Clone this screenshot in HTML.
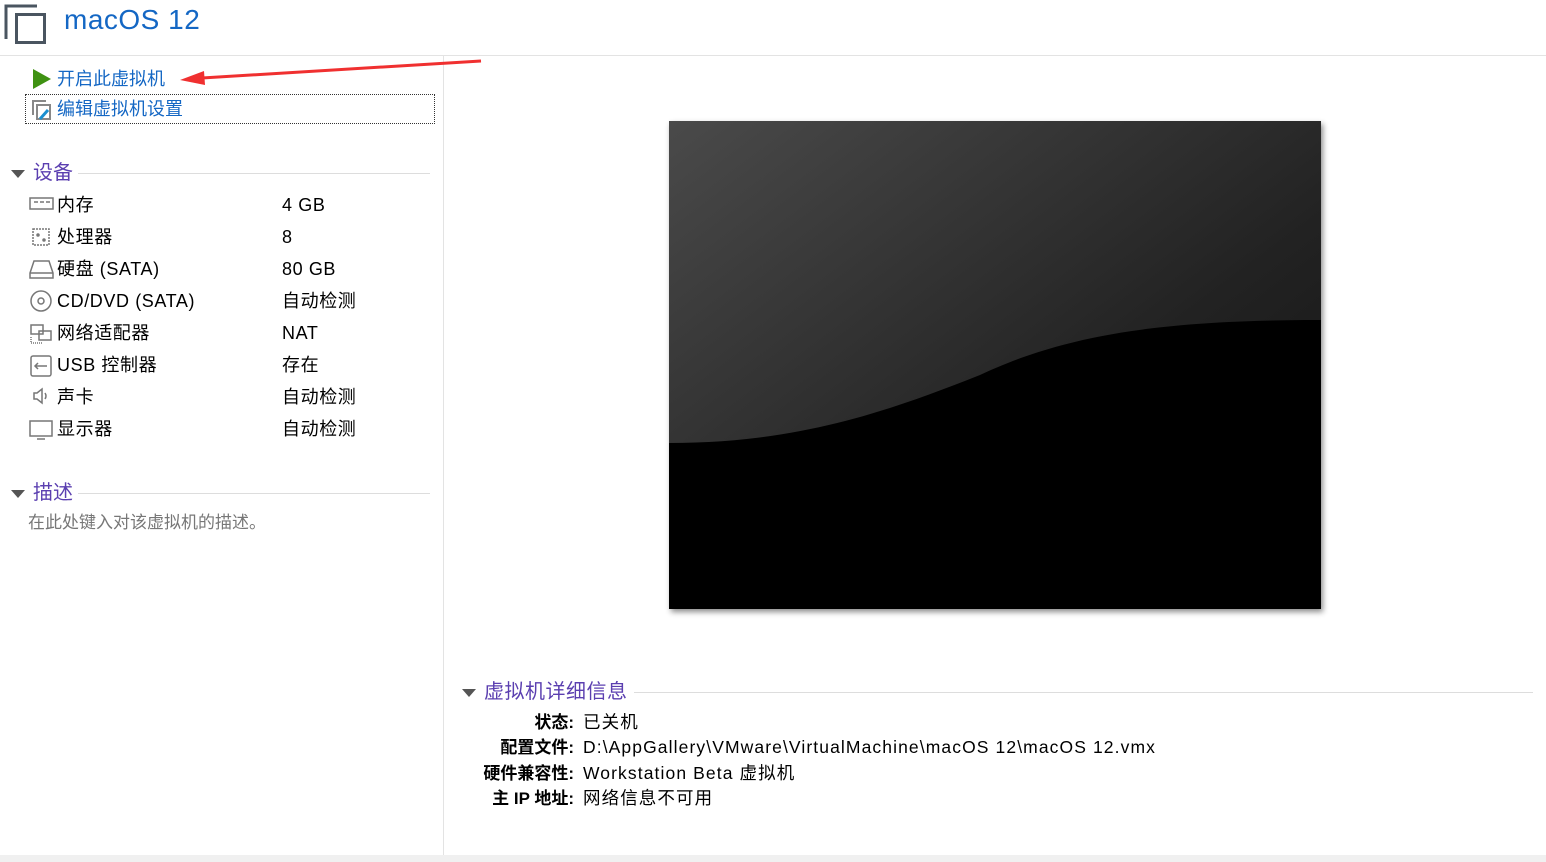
<!DOCTYPE html>
<html><head><meta charset="utf-8"><style>
*{margin:0;padding:0;box-sizing:border-box}
body{width:1546px;height:862px;background:#fff;font-family:"Liberation Sans","Noto Sans CJK SC",sans-serif;position:relative;overflow:hidden;color:#000}
.a{position:absolute;white-space:nowrap;line-height:22px}
.t{font-size:18px;letter-spacing:0.6px}
.hd{color:#5b3fb0;font-size:20px;line-height:26px}
.ln{position:absolute;height:1px;background:#ddd}
</style></head><body>
<svg class="a" style="left:3px;top:2px" width="44" height="44"><path d="M3 37V4H34" fill="none" stroke="#4a5560" stroke-width="3"/><rect x="13.5" y="12.5" width="28" height="28" fill="none" stroke="#4a5560" stroke-width="3"/></svg>
<div class="a" style="left:64px;top:4px;font-size:28px;line-height:32px;color:#1467c4;letter-spacing:0.5px">macOS 12</div>
<div class="ln" style="left:0;top:55px;width:1546px;background:#e3e3e3"></div>
<div class="a" style="left:443px;top:56px;width:1px;height:800px;background:#e3e3e3"></div>
<svg class="a" style="left:32px;top:69px" width="20" height="20"><path d="M1 0L19 10L1 20Z" fill="#3f9212"/></svg>
<div class="a" style="left:57px;top:68px;color:#1467c4;font-size:18px">开启此虚拟机</div>
<svg class="a" style="left:178px;top:58px" width="305" height="30"><path d="M303 3L24 20" stroke="#f03030" stroke-width="3"/><path d="M2 22L26 13L27 27Z" fill="#f03030"/></svg>
<div class="a" style="left:25px;top:94px;width:410px;height:30px;border:1px dotted #333"></div>
<svg class="a" style="left:31px;top:99px" width="22" height="22"><path d="M2 16V2H15" fill="none" stroke="#888" stroke-width="2"/><path d="M6 20V6H19V20Z" fill="none" stroke="#888" stroke-width="2"/><path d="M9 20L17 11" stroke="#1a8fd0" stroke-width="3"/></svg>
<div class="a" style="left:57px;top:98px;color:#1467c4;font-size:18px">编辑虚拟机设置</div>
<svg class="a" style="left:10px;top:169px" width="16" height="10"><path d="M1 1H15L8 9Z" fill="#555"/></svg>
<div class="a hd" style="left:33px;top:160px">设备</div>
<div class="ln" style="left:78px;top:173px;width:352px"></div>
<div class="a t" style="left:57px;top:194px">内存</div><div class="a t" style="left:282px;top:194px">4 GB</div>
<div class="a t" style="left:57px;top:226px">处理器</div><div class="a t" style="left:282px;top:226px">8</div>
<div class="a t" style="left:57px;top:258px">硬盘 (SATA)</div><div class="a t" style="left:282px;top:258px">80 GB</div>
<div class="a t" style="left:57px;top:290px">CD/DVD (SATA)</div><div class="a t" style="left:282px;top:290px">自动检测</div>
<div class="a t" style="left:57px;top:322px">网络适配器</div><div class="a t" style="left:282px;top:322px">NAT</div>
<div class="a t" style="left:57px;top:354px">USB 控制器</div><div class="a t" style="left:282px;top:354px">存在</div>
<div class="a t" style="left:57px;top:386px">声卡</div><div class="a t" style="left:282px;top:386px">自动检测</div>
<div class="a t" style="left:57px;top:418px">显示器</div><div class="a t" style="left:282px;top:418px">自动检测</div>
<svg class="a" style="left:29px;top:194px" width="26" height="250" fill="none" stroke="#777" stroke-width="1.5">
<rect x="1" y="4" width="23" height="11"/><path d="M5 8h4M11 8h4M17 8h4"/>
<rect x="4" y="35" width="16" height="16" stroke-dasharray="2 1"/><circle cx="9" cy="41" r="1" fill="#777"/><circle cx="15" cy="46" r="1" fill="#777"/>
<path d="M1 79L5 67H20L24 79V84H1Z"/><path d="M1 79H24"/>
<circle cx="12" cy="107" r="10"/><circle cx="12" cy="107" r="3"/>
<rect x="2" y="131" width="12" height="9"/><rect x="10" y="137" width="12" height="9"/><path d="M2 143v6h12" stroke-dasharray="1 1"/>
<rect x="2" y="162" width="20" height="20" rx="2"/><path d="M6 172h12M9 169l-3 3 3 3"/>
<path d="M5 199h3l5-4v14l-5-4H5Z"/><path d="M16 199q2 3 0 6"/>
<rect x="1" y="227" width="22" height="15"/><path d="M8 245h8"/>
</svg>
<svg class="a" style="left:10px;top:489px" width="16" height="10"><path d="M1 1H15L8 9Z" fill="#555"/></svg>
<div class="a hd" style="left:33px;top:480px">描述</div>
<div class="ln" style="left:78px;top:493px;width:352px"></div>
<div class="a" style="left:28px;top:512px;font-size:17px;color:#777">在此处键入对该虚拟机的描述。</div>
<svg class="a" style="left:669px;top:121px;filter:drop-shadow(2px 3px 3px rgba(0,0,0,.45))" width="652" height="488">
<defs><linearGradient id="g" x1="0" y1="0" x2="1" y2="1"><stop offset="0" stop-color="#4a4a4a"/><stop offset="0.6" stop-color="#222"/><stop offset="1" stop-color="#111"/></linearGradient></defs>
<rect width="652" height="488" fill="url(#g)"/>
<path d="M0 322C130 322 220 290 311 254C400 212 500 199 652 199V488H0Z" fill="#000"/>
</svg>
<svg class="a" style="left:461px;top:688px" width="16" height="10"><path d="M1 1H15L8 9Z" fill="#555"/></svg>
<div class="a hd" style="left:484px;top:679px;letter-spacing:0.5px">虚拟机详细信息</div>
<div class="ln" style="left:634px;top:692px;width:899px"></div>
<div class="a" style="right:972px;top:710px;font-size:17px;font-weight:bold;text-align:right;line-height:25.3px">状态:<br>配置文件:<br>硬件兼容性:<br>主 IP 地址:</div>
<div class="a" style="left:583px;top:710px;font-size:17.5px;line-height:25.3px;letter-spacing:1.1px">已关机<br>D:\AppGallery\VMware\VirtualMachine\macOS 12\macOS 12.vmx<br>Workstation Beta 虚拟机<br>网络信息不可用</div>
<div class="a" style="left:0;top:855px;width:1546px;height:7px;background:#f0f0f0"></div>
</body></html>
